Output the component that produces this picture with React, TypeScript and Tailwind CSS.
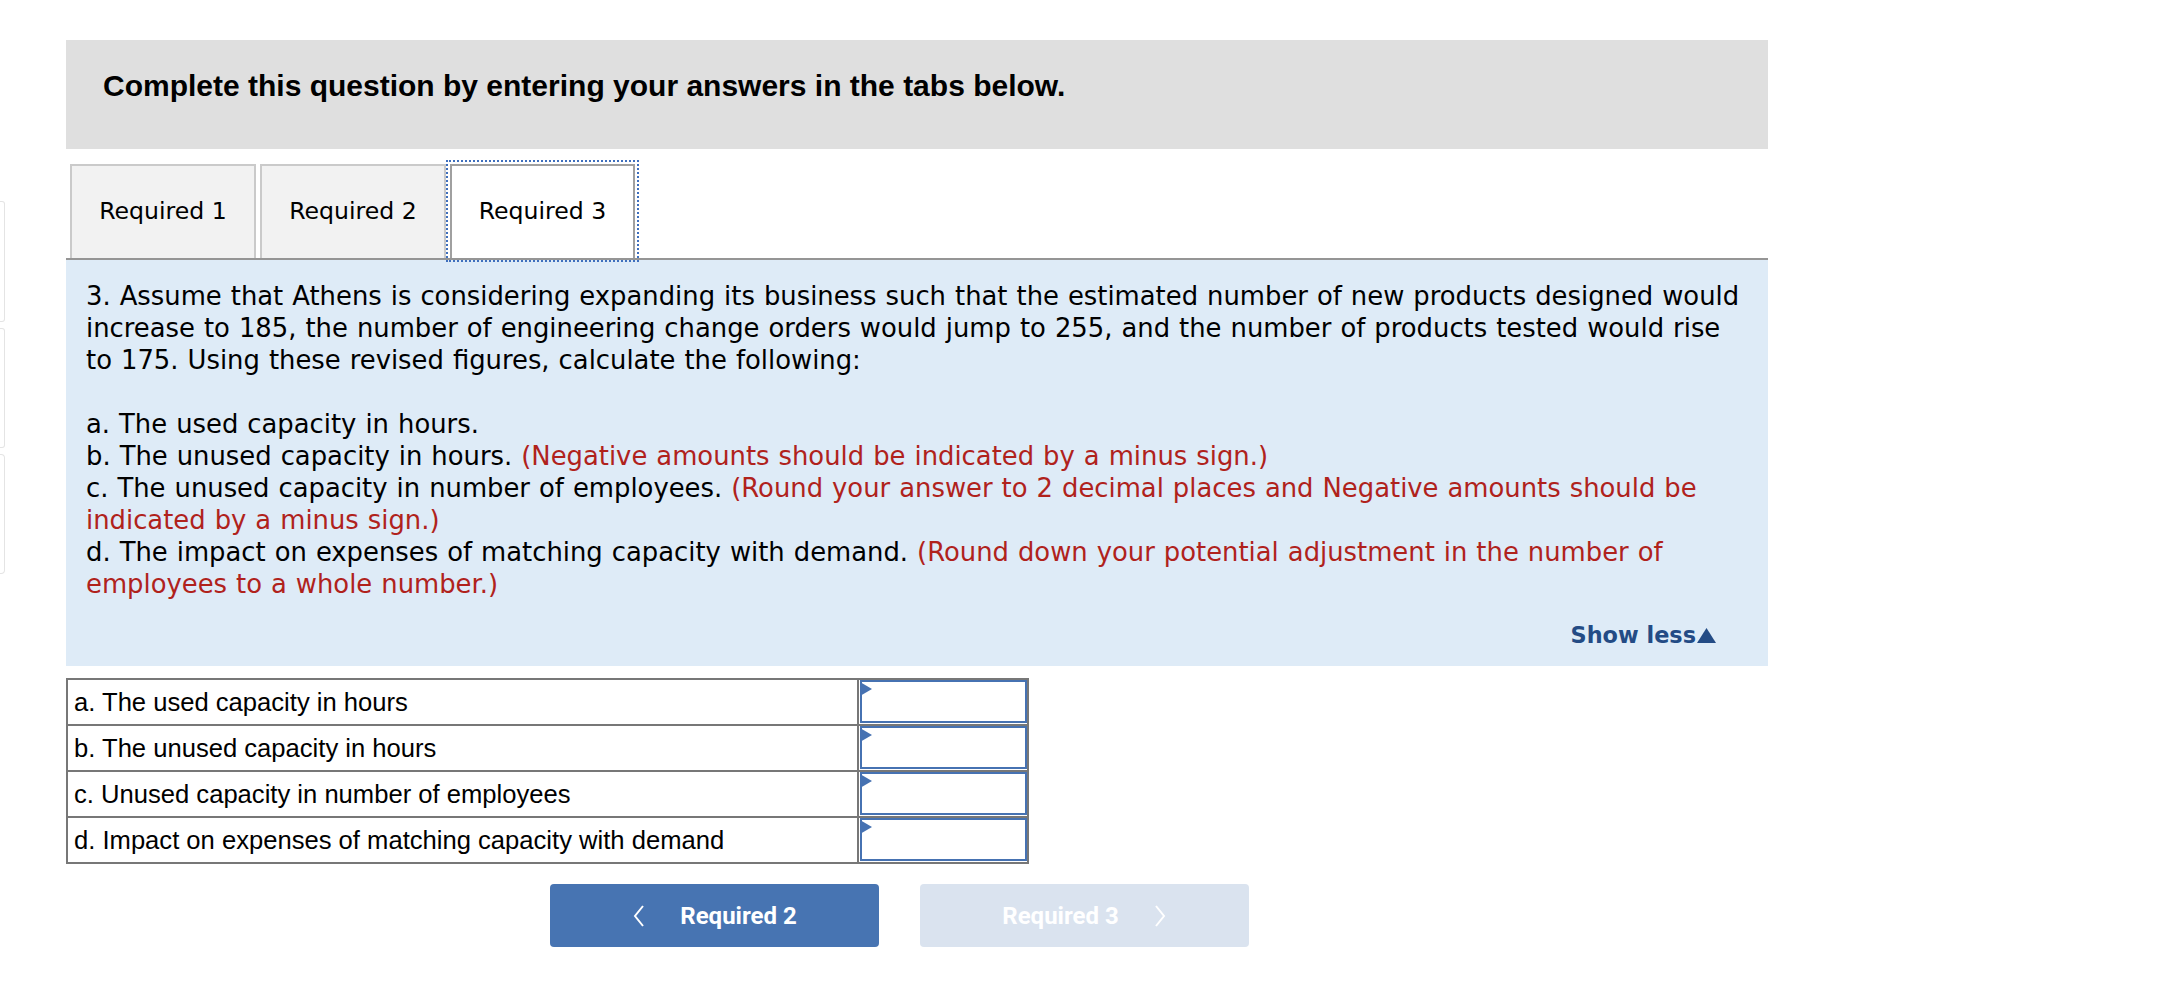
import React from "react";

const rows = [
  "a. The used capacity in hours",
  "b. The unused capacity in hours",
  "c. Unused capacity in number of employees",
  "d. Impact on expenses of matching capacity with demand",
];

function SideCards() {
  return (
    <div className="w-[5px] shrink-0 pt-[201px] flex flex-col gap-[6px]">
      <div className="h-[121px] border-y border-r border-[#e4e4e4] rounded-r-[3px]" />
      <div className="h-[120px] border-y border-r border-[#e4e4e4] rounded-r-[3px]" />
      <div className="h-[120px] border-y border-r border-[#e4e4e4] rounded-r-[4px]" />
    </div>
  );
}

const red = "text-[#b0221c]";

export default function App() {
  return (
    <div className="flex w-[2160px] min-h-[998px] bg-white">
      <SideCards />
      <div className="ml-[61px] w-[1702px] pt-[40px]">
        {/* Header */}
        <div className="h-[109px] bg-[#dfdfdf] pl-[37px] pt-[28px]">
          <h2 className="font-['Liberation_Sans',Arial,sans-serif] font-bold text-[30px] leading-[36px] text-black">
            Complete this question by entering your answers in the tabs below.
          </h2>
        </div>

        {/* Tabs */}
        <div className="mt-[15px] flex gap-[4px] pl-[4px] border-b-2 border-[#959595] font-['Verdana','DejaVu_Sans',sans-serif] text-[23.6px] text-black">
          <div className="w-[186px] h-[94px] flex items-center justify-center bg-[#f2f2f2] border-2 border-b-0 border-[#cacaca]">
            Required 1
          </div>
          <div className="w-[186px] h-[94px] flex items-center justify-center bg-[#f2f2f2] border-2 border-b-0 border-[#cacaca]">
            Required 2
          </div>
          <div className="relative z-10 w-[185px] h-[94px] flex items-center justify-center bg-white border-2 border-b-0 border-[#a0a0a0] outline-2 outline-dotted outline-[#3f6fbd] outline-offset-2">
            Required 3
          </div>
        </div>

        {/* Question panel */}
        <div className="bg-[#deebf7] pl-[20px] pr-[20px] pt-[20px] pb-[15px] font-['Verdana','DejaVu_Sans',sans-serif] text-black">
          <div className="text-[25.85px] leading-[32px] [word-spacing:0.8px]">
            <p>
              3. Assume that Athens is considering expanding its business such that the estimated number of new products designed would increase to 185, the number of engineering change orders would jump to 255, and the number of products tested would rise to 175. Using these revised figures, calculate the following:
            </p>
            <p className="mt-[32px]">a. The used capacity in hours.</p>
            <p>
              b. The unused capacity in hours. <span className={red}>(Negative amounts should be indicated by a minus sign.)</span>
            </p>
            <p>
              c. The unused capacity in number of employees.{" "}
              <span className={red}>(Round your answer to 2 decimal places and Negative amounts should be</span>
            </p>
            <p className={red}>indicated by a minus sign.)</p>
            <p>
              d. The impact on expenses of matching capacity with demand.{" "}
              <span className={red}>(Round down your potential adjustment in the number of</span>
            </p>
            <p className={red}>employees to a whole number.)</p>
          </div>
          <div className="mt-[19px] flex justify-end pr-[32px]">
            <span className="flex items-end gap-[1px] font-bold text-[22.4px] leading-[32px] text-[#234b85] cursor-pointer">
              Show less
              <svg width="19" height="15" viewBox="0 0 19 15" className="mb-[8px]">
                <polygon points="9.5,0 19,15 0,15" fill="#234b85" />
              </svg>
            </span>
          </div>
        </div>

        {/* Answer table */}
        <div className="mt-[12px] w-[963px] border-2 border-[#777777] font-['Liberation_Sans',Arial,sans-serif] text-[25.6px] text-black">
          {rows.map((label, i) => (
            <div
              key={label}
              className={`flex h-[44px] ${i < rows.length - 1 ? "box-content border-b-2 border-[#777777]" : ""}`}
            >
              <div className="flex-1 border-r-2 border-[#777777] pl-[6px] leading-[44px]">{label}</div>
              <div className="relative w-[168px] pl-[1px]">
                <div className="h-[43px] border-2 border-[#4672b2] bg-white" />
                <svg width="12" height="14" viewBox="0 0 12 14" className="absolute left-[1px] top-[2px]">
                  <polygon points="0,0 12,7 0,14" fill="#4672b2" />
                </svg>
              </div>
            </div>
          ))}
        </div>

        {/* Navigation buttons */}
        <div className="mt-[20px] flex gap-[41px] pl-[484px] font-['Roboto',sans-serif] font-bold text-[24px] text-white">
          <button className="w-[329px] h-[63px] rounded-[4px] bg-[#4774b2] flex items-center justify-center gap-[34px]">
            <svg width="14" height="22" viewBox="0 0 14 22">
              <polyline points="11,1 3,11 11,21" fill="none" stroke="white" strokeWidth="2" />
            </svg>
            <span>Required 2</span>
          </button>
          <button className="w-[329px] h-[63px] rounded-[4px] bg-[#dae3ef] flex items-center justify-center gap-[34px]">
            <span>Required 3</span>
            <svg width="14" height="22" viewBox="0 0 14 22">
              <polyline points="3,1 11,11 3,21" fill="none" stroke="white" strokeWidth="2" />
            </svg>
          </button>
        </div>
      </div>
    </div>
  );
}
